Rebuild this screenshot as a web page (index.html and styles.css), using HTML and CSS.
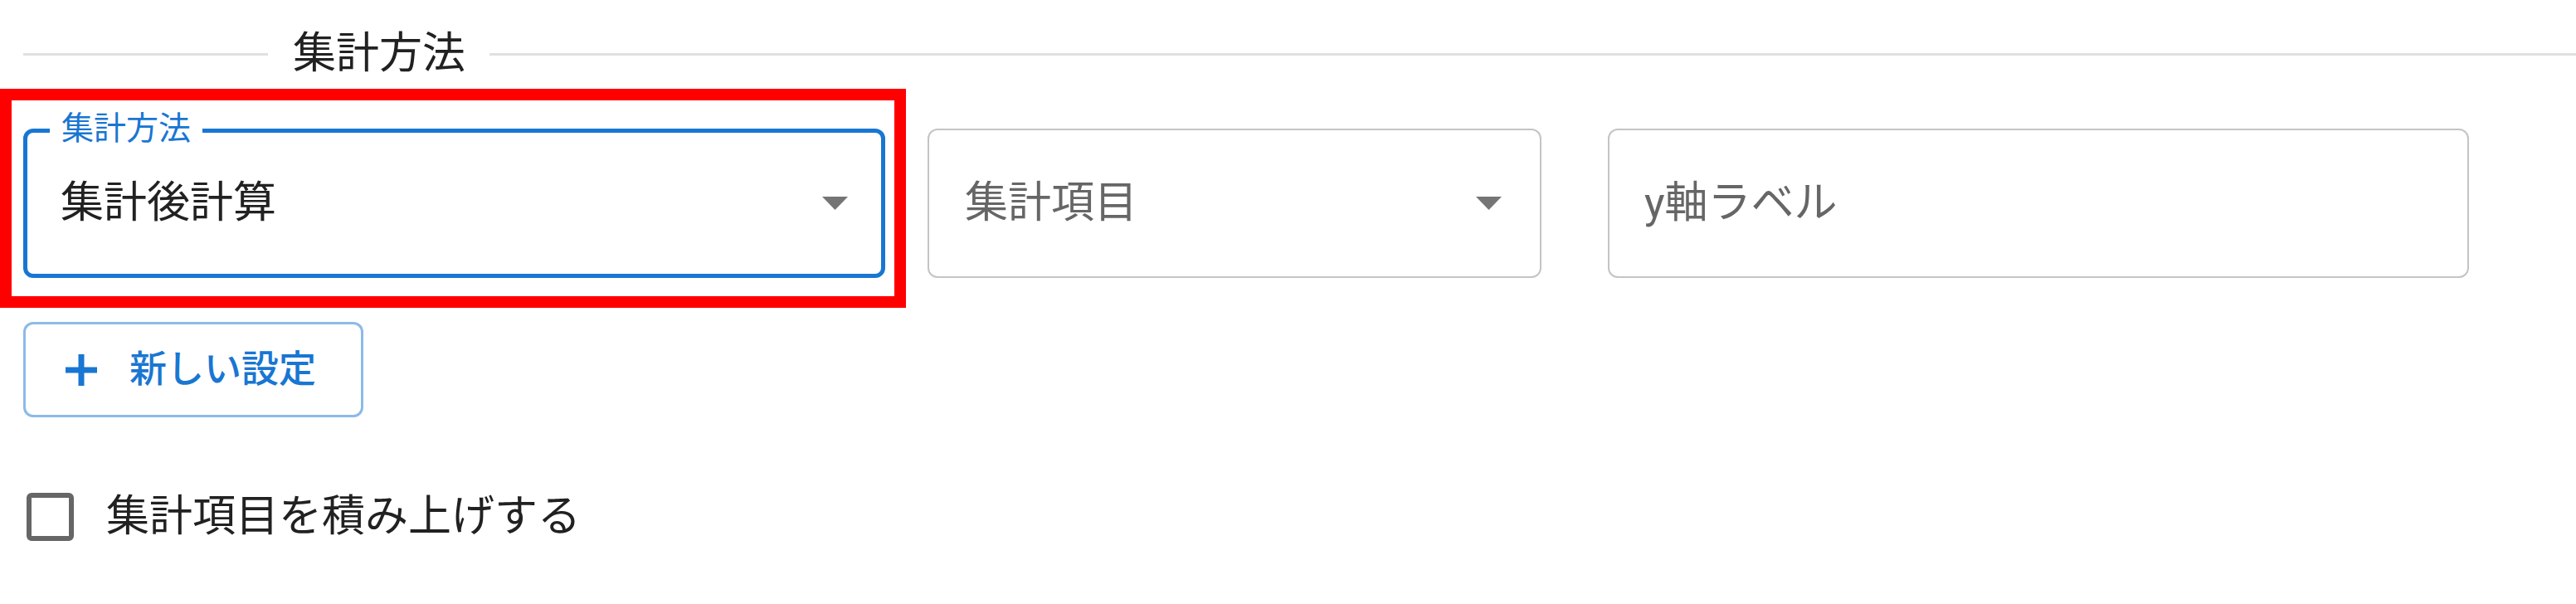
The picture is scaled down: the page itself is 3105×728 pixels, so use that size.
FILE: index.html
```html
<!DOCTYPE html>
<html lang="ja">
<head>
<meta charset="utf-8">
<title>集計方法</title>
<link rel="stylesheet" href="styles.css">
</head>
<body>
<div class="page">
  <div class="divider">
    <div class="divider-line divider-line-left"></div>
    <div class="divider-text">集計方法</div>
    <div class="divider-line divider-line-right"></div>
  </div>

  <div class="fields">
    <div class="field field-focused field-method">
      <span class="field-label">集計方法</span>
      <span class="field-value">集計後計算</span>
      <svg class="arrow arrow-method" width="31" height="16" viewBox="0 0 31 16"><polygon points="0,0 31,0 15.5,16" fill="#757575"/></svg>
    </div>
    <div class="field field-item">
      <span class="field-placeholder">集計項目</span>
      <svg class="arrow arrow-item" width="31" height="16" viewBox="0 0 31 16"><polygon points="0,0 31,0 15.5,16" fill="#757575"/></svg>
    </div>
    <div class="field field-ylabel">
      <span class="field-placeholder">y軸ラベル</span>
    </div>
  </div>

  <button class="btn-add" type="button">
    <svg class="plus" width="38" height="38" viewBox="0 0 38 38"><rect x="15.5" y="0" width="7" height="38" fill="#1976d2"/><rect x="0" y="15.5" width="38" height="7" fill="#1976d2"/></svg>
    <span class="btn-text">新しい設定</span>
  </button>

  <label class="check-row">
    <span class="checkbox"></span>
    <span class="check-label">集計項目を積み上げする</span>
  </label>
</div>
<div class="highlight"></div>
</body>
</html>
```

FILE: styles.css
```css
* { box-sizing: border-box; }
html, body {
  margin: 0;
  padding: 0;
  background: #ffffff;
}
body {
  width: 3105px;
  height: 728px;
  position: relative;
  overflow: hidden;
  font-family: Roboto, "Noto Sans CJK JP", sans-serif;
  color: #212121;
}
.page {
  padding-left: 28px;
}
.divider {
  display: flex;
  align-items: center;
  height: 60px;
  margin-top: 35px;
}
.divider-line {
  height: 3px;
  background: #e0e0e0;
}
.divider-line-left { width: 295px; }
.divider-line-right { flex: 1; }
.divider-text {
  font-size: 52px;
  line-height: 60px;
  padding: 0 29px 0 30px;
  color: #212121;
  white-space: nowrap;
}
.fields {
  display: flex;
  height: 180px;
  margin-top: 60px;
}
.field {
  position: relative;
  display: flex;
  align-items: center;
  height: 180px;
  border: 2px solid #c4c4c4;
  border-radius: 12px;
}
.field-focused {
  border: 5px solid #1976d2;
}
.field-method {
  width: 1039px;
  margin-right: 51px;
  padding-left: 40px;
}
.field-item {
  width: 740px;
  margin-right: 80px;
  padding-left: 43px;
}
.field-ylabel {
  width: 1038px;
  padding-left: 42px;
}
.field-label {
  position: absolute;
  left: 27px;
  top: -27px;
  padding: 0 14px;
  background: #ffffff;
  color: #1976d2;
  font-size: 39px;
  line-height: 44px;
  white-space: nowrap;
}
.field-value {
  font-size: 52px;
  line-height: 60px;
  color: #212121;
}
.field-placeholder {
  font-size: 52px;
  line-height: 60px;
  color: #666666;
}
.arrow {
  margin-left: auto;
  display: block;
}
.arrow-method { margin-right: 40px; }
.arrow-item { margin-right: 46px; }
.btn-add {
  display: flex;
  align-items: center;
  width: 410px;
  height: 115px;
  margin-top: 53px;
  padding: 0 0 0 48px;
  border: 3px solid rgba(25, 118, 210, 0.5);
  border-radius: 12px;
  background: #ffffff;
  font-family: Roboto, "Noto Sans CJK JP", sans-serif;
  cursor: pointer;
}
.plus { display: block; flex: none; }
.btn-text {
  margin-left: 39px;
  font-size: 45px;
  font-weight: 500;
  line-height: 52px;
  color: #1976d2;
}
.check-row {
  display: flex;
  align-items: center;
  height: 58px;
  margin-top: 91px;
}
.checkbox {
  display: block;
  width: 57px;
  height: 58px;
  margin-left: 4px;
  border: 6px solid #666666;
  border-radius: 6px;
}
.check-label {
  margin-left: 39px;
  font-size: 52px;
  line-height: 60px;
  color: #212121;
}
.highlight {
  position: absolute;
  left: 0;
  top: 107px;
  width: 1092px;
  height: 264px;
  border: 14px solid #ff0000;
  pointer-events: none;
}
```
